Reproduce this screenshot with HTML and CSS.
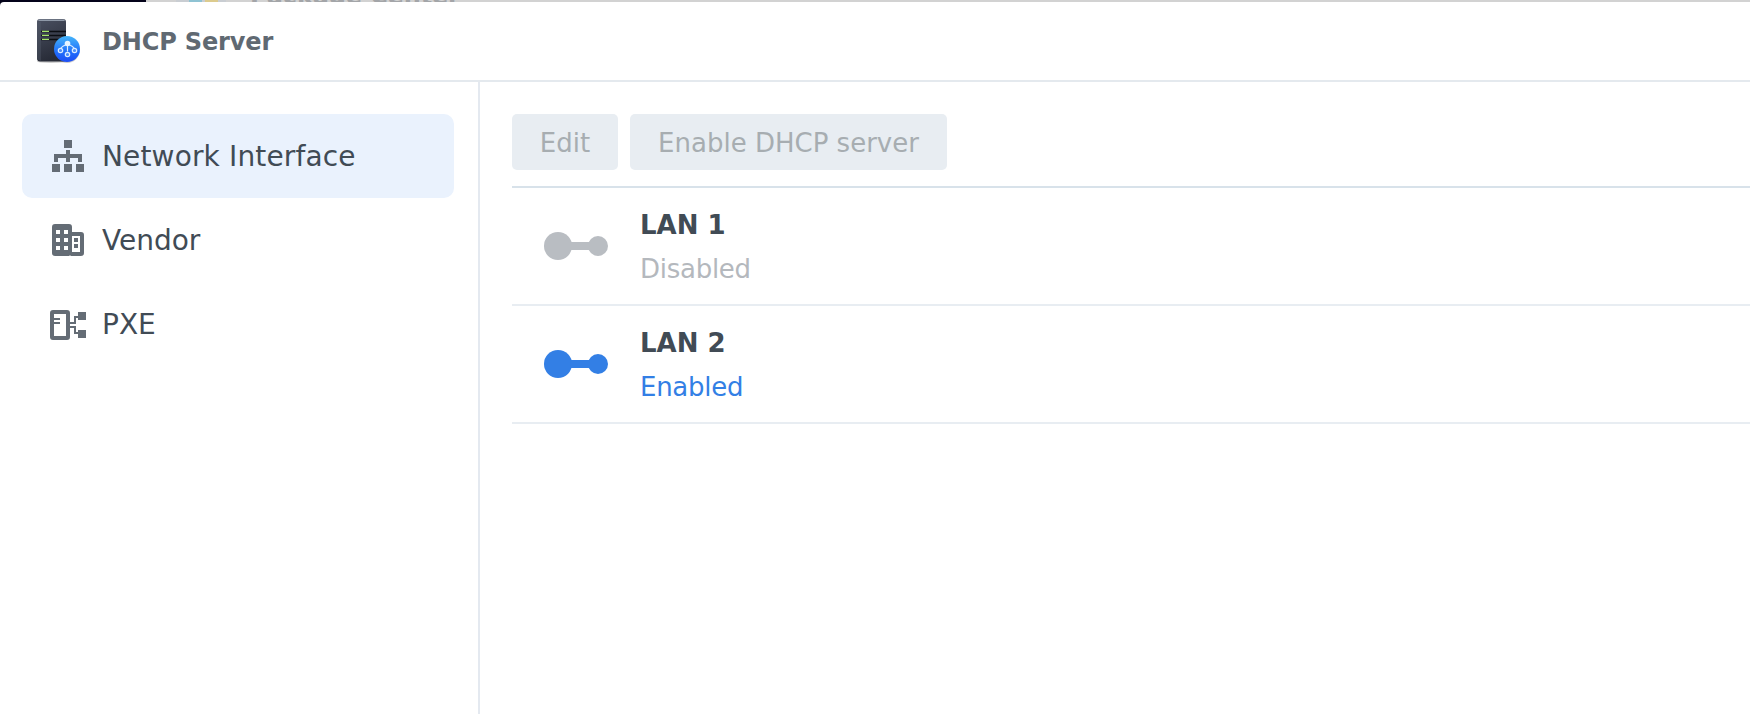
FILE: index.html
```html
<!DOCTYPE html>
<html lang="en">
<head>
<meta charset="utf-8">
<title>DHCP Server</title>
<link rel="stylesheet" href="styles.css">
</head>
<body>
<div class="backdrop">
  <div class="backdrop-dark"></div>
  <div class="backdrop-window"><svg class="backdrop-icon" width="50" height="2" viewBox="0 0 50 2"><rect width="50" height="2" fill="#c9cdd2"/><rect x="13" width="13" height="2" fill="#8fc3d3"/><rect x="29" width="13" height="2" fill="#dccb8e"/></svg><span class="backdrop-title">Package Center</span></div>
</div>
<div class="window">
  <header class="titlebar">
    <svg class="app-icon" width="48" height="48" viewBox="0 0 48 48">
      <defs>
        <linearGradient id="tower" x1="0" y1="0" x2="0.3" y2="1"><stop offset="0" stop-color="#4a5061"/><stop offset="1" stop-color="#282c38"/></linearGradient>
        <linearGradient id="badge" x1="0" y1="0" x2="0" y2="1"><stop offset="0" stop-color="#45b5fa"/><stop offset="0.6" stop-color="#2170fb"/><stop offset="1" stop-color="#1c4cf5"/></linearGradient>
      </defs>
      <ellipse cx="18" cy="43.500" rx="14" ry="1.500" fill="#aaa" opacity=".6"/>
      <circle cx="34" cy="32.300" r="12.800" fill="#999" opacity=".5"/>
      <rect x="4" y="1" width="29" height="42.500" rx="3" fill="url(#tower)"/>
      <path d="M6 2.200h25" stroke="#8f99a8" stroke-width="1.600" stroke-linecap="round"/>
      <path d="M4 4v37l4 2V4z" fill="#596070" opacity=".35"/>
      <path d="M8 13.500h25M8 17.500h25M8 21.500h25" stroke="#0c0e14" stroke-width="1.300"/>
      <path d="M9 13.300h7M9 17.300h7M9 21.300h7" stroke="#a5e56a" stroke-width="1.300"/>
      <circle cx="34" cy="31" r="13" fill="url(#badge)"/>
      <path d="M34.500 25.500v8M34.500 26.500c-5 1-6.500 3-7 5M34.500 26.500c5 1 6.500 3 7 5" fill="none" stroke="#dcecff" stroke-width="1.200"/>
      <circle cx="34.500" cy="25.500" r="2.800" fill="#e6f3ff"/>
      <g fill="#4b8df8" stroke="#dcecff" stroke-width="1.200"><circle cx="27.500" cy="32.500" r="2.200"/><circle cx="34.500" cy="36.500" r="2.200"/><circle cx="41.500" cy="32.500" r="2.200"/></g>
    </svg>
    <h1 class="title">DHCP Server</h1>
  </header>
  <div class="body">
    <nav class="sidebar">
      <a class="nav-item active">
        <svg class="nav-icon" width="36" height="36" viewBox="0 0 36 36"><path d="M14 2h8v8h-8zM2 26h8v8H2zM14 26h8v8h-8zM26 26h8v8h-8zM16 12h4v4h12v8h-4v-4h-8v4h-4v-4H8v4H4v-8h12z"/></svg>
        <span class="nav-label network">Network Interface</span>
      </a>
      <a class="nav-item">
        <svg class="nav-icon" width="36" height="36" viewBox="0 0 36 36"><path fill-rule="evenodd" d="M5 2h14a3 3 0 0 1 3 3v5h9a3 3 0 0 1 3 3v18a3 3 0 0 1-3 3H21l-1-.7-1 .7H5a3 3 0 0 1-3-3V5a3 3 0 0 1 3-3zM6 8v4h4V8zM14 8v4h4V8zM6 16v4h4v-4zM14 16v4h4v-4zM6 24v4h4v-4zM14 24v4h4v-4zM22 14v16h8V14z"/><path d="M24 16h4v4h-4zM24 22h4v4h-4z"/></svg>
        <span class="nav-label">Vendor</span>
      </a>
      <a class="nav-item">
        <svg class="nav-icon" width="36" height="36" viewBox="0 0 36 36"><path fill-rule="evenodd" d="M3 4h14a3 3 0 0 1 3 3v24a3 3 0 0 1-3 3H3a3 3 0 0 1-3-3V7a3 3 0 0 1 3-3zM4 8v22h12V8z"/><path d="M4 12h6v2H4zM4 16h6v2H4zM28 6h8v8h-8zM28 24h8v8h-8zM20 16h4v-6h4v2h-2v6h-6zM20 20h6v6h2v2h-4v-6h-4z"/></svg>
        <span class="nav-label">PXE</span>
      </a>
    </nav>
    <main class="content">
      <div class="toolbar">
        <button class="button edit" disabled>Edit</button>
        <button class="button enable" disabled>Enable DHCP server</button>
      </div>
      <ul class="interfaces">
        <li class="interface disabled">
          <svg class="link-icon" width="64" height="28" viewBox="0 0 64 28"><circle cx="14" cy="14" r="14"/><circle cx="54" cy="14" r="10"/><path d="M20 10h30v8H20z"/></svg>
          <div class="info"><div class="name">LAN 1</div><div class="status">Disabled</div></div>
        </li>
        <li class="interface enabled">
          <svg class="link-icon" width="64" height="28" viewBox="0 0 64 28"><circle cx="14" cy="14" r="14"/><circle cx="54" cy="14" r="10"/><path d="M20 10h30v8H20z"/></svg>
          <div class="info"><div class="name">LAN 2</div><div class="status">Enabled</div></div>
        </li>
      </ul>
    </main>
  </div>
</div>
</body>
</html>
```
FILE: styles.css
```css
* { box-sizing: border-box; }
body {
  margin: 0;
  height: 714px;
  overflow: hidden;
  display: flex;
  flex-direction: column;
  background: #04031a;
  font-family: "DejaVu Sans", sans-serif;
  color: #414b55;
}
.backdrop { display: flex; height: 2px; flex: none; overflow: hidden; }
.backdrop-dark { width: 146px; background: #04031a; }
.backdrop-window { flex: 1; display: flex; align-items: flex-start; padding-left: 30px; background: #d2d2d2; }
.backdrop-icon { flex: none; }
.backdrop-title {
  margin: -18px 0 0 24px;
  font-size: 24px;
  line-height: 28px;
  font-weight: bold;
  letter-spacing: -0.15px;
  color: #a3a5a8;
  white-space: nowrap;
}
.window { flex: 1; display: flex; flex-direction: column; background: #fff; border-top-left-radius: 4px; }
.titlebar {
  height: 80px;
  display: flex;
  align-items: center;
  gap: 21px;
  padding-left: 33px;
  border-bottom: 2px solid #e4e9ee;
}
.app-icon { margin-top: 2px; }
.title { margin: 2px 0 0; font-size: 24px; line-height: 30px; font-weight: bold; letter-spacing: -0.15px; color: #606972; }
.body { flex: 1; display: flex; }
.sidebar { width: 480px; padding: 32px 24px 0 22px; border-right: 2px solid #e4e9f0; }
.nav-item { display: flex; align-items: center; gap: 16px; height: 84px; padding-left: 28px; border-radius: 10px; font-size: 28px; }
.nav-item.active { background: #eaf2fd; }
.nav-icon { fill: #646c75; flex: none; }
.network { letter-spacing: 0.15px; }
.content { flex: 1; padding: 32px 0 0 32px; }
.toolbar { display: flex; gap: 12px; padding-bottom: 16px; border-bottom: 2px solid #d8e2ea; }
.button {
  height: 56px;
  padding: 2px 0 0;
  border: 0;
  border-radius: 5px;
  background: #e8edf2;
  color: #a7adb1;
  font: 26px "DejaVu Sans", sans-serif;
}
.edit { width: 106px; }
.enable { width: 317px; }
.interfaces { list-style: none; margin: 0; padding: 0; }
.interface { display: flex; align-items: center; gap: 32px; height: 118px; padding-left: 32px; border-bottom: 2px solid #e8edf2; font-size: 26px; line-height: 44px; }
.info { padding-top: 2px; }
.name { font-weight: bold; }
.status { letter-spacing: -0.27px; }
.disabled .status { color: #b4b8bd; }
.disabled .link-icon { fill: #b9bdc2; }
.enabled .status { color: #337fe5; }
.enabled .link-icon { fill: #337fe5; }
```
